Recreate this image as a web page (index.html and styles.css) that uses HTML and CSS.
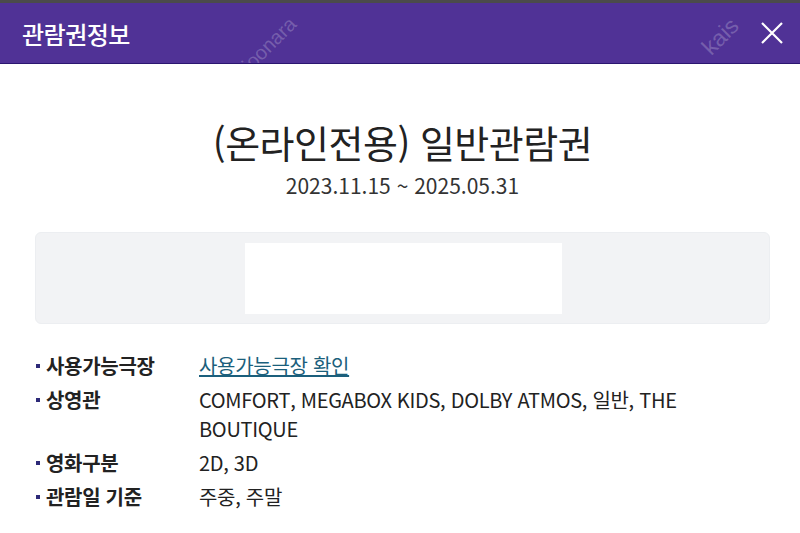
FILE: index.html
```html
<!DOCTYPE html>
<html lang="ko">
<head>
<meta charset="utf-8">
<link rel="stylesheet" href="styles.css">
</head>
<body>
<div class="topbar"></div>
<header class="header">
  <h1 class="header-title">관람권정보</h1>
  <button class="close" aria-label="닫기">
    <svg width="24" height="24" viewBox="0 0 24 24"><path d="M2 2 L22 22 M22 2 L2 22" stroke="#fff" stroke-width="2.2" fill="none"/></svg>
  </button>
  <span class="wm wm-joonara">joonara</span>
  <span class="wm wm-kais">kais</span>
</header>
<main class="content">
  <h2 class="ticket-title">(온라인전용) 일반관람권</h2>
  <p class="ticket-date">2023.11.15 ~ 2025.05.31</p>
  <div class="barcode-box">
    <div class="barcode"></div>
  </div>
  <ul class="info">
    <li class="info-row"><span class="info-label">사용가능극장</span><span class="info-value"><a href="#" class="link">사용가능극장 확인</a></span></li>
    <li class="info-row"><span class="info-label">상영관</span><span class="info-value">COMFORT, MEGABOX KIDS, DOLBY ATMOS, 일반, THE BOUTIQUE</span></li>
    <li class="info-row"><span class="info-label">영화구분</span><span class="info-value">2D, 3D</span></li>
    <li class="info-row"><span class="info-label">관람일 기준</span><span class="info-value">주중, 주말</span></li>
  </ul>
</main>
</body>
</html>
```
FILE: styles.css
```css
* { box-sizing: border-box; }
html, body { margin: 0; padding: 0; background: #fff; }
body {
  font-family: "Noto Sans CJK KR", "Noto Sans", sans-serif;
  color: #222;
  width: 800px;
  height: 533px;
  overflow: hidden;
}
.topbar { height: 3px; background: #4b4b4b; }
.header {
  position: relative;
  height: 61px;
  background: #503296;
  border-bottom: 1px solid #2b1670;
  display: flex;
  align-items: center;
  justify-content: space-between;
  padding: 0 16px 0 22px;
  overflow: hidden;
}
.header-title {
  margin: 0;
  color: #fff;
  font-size: 24px;
  font-weight: 500;
  letter-spacing: -0.5px;
}
.close {
  background: none;
  border: 0;
  padding: 0;
  width: 24px;
  height: 24px;
  display: flex;
}
.wm {
  position: absolute;
  color: rgba(255,255,255,0.22);
  font-family: "Liberation Sans", sans-serif;
  transform: rotate(-45deg);
  pointer-events: none;
}
.wm-joonara { left: 236px; top: 30px; font-size: 20px; }
.wm-kais { left: 700px; top: 20px; font-size: 23px; }
.content { padding: 0 30px 0 35px; }
.ticket-title {
  margin: 51px 0 0;
  text-align: center;
  font-size: 38px;
  font-weight: 400;
  line-height: 54px;
  color: #222;
  letter-spacing: -0.5px;
}
.ticket-date {
  margin: 2px 0 0;
  text-align: center;
  font-size: 21px;
  line-height: 28px;
  color: #333;
}
.barcode-box {
  margin-top: 33px;
  height: 92px;
  background: #f2f3f5;
  border-radius: 6px;
  border: 1px solid #eceef1;
  display: flex;
  justify-content: center;
  align-items: flex-start;
  padding-top: 10px;
}
.barcode {
  width: 317px;
  height: 71px;
  background: #fff;
  margin-left: 2px;
}
.info {
  list-style: none;
  margin: 27px 0 0;
  padding: 0;
  display: flex;
  flex-direction: column;
  gap: 5px;
}
.info-row {
  display: grid;
  grid-template-columns: 164px 1fr;
  font-size: 20px;
  line-height: 29px;
}
.info-label {
  position: relative;
  padding-left: 11px;
  font-weight: 700;
  color: #222;
  letter-spacing: -0.3px;
}
.info-label::before {
  content: "";
  position: absolute;
  left: 1px;
  top: 13px;
  width: 4px;
  height: 4px;
  background: #2d2a78;
}
.info-value { color: #222; letter-spacing: -0.3px; }
.link { color: #1b5f7c; text-decoration: underline; }
```
